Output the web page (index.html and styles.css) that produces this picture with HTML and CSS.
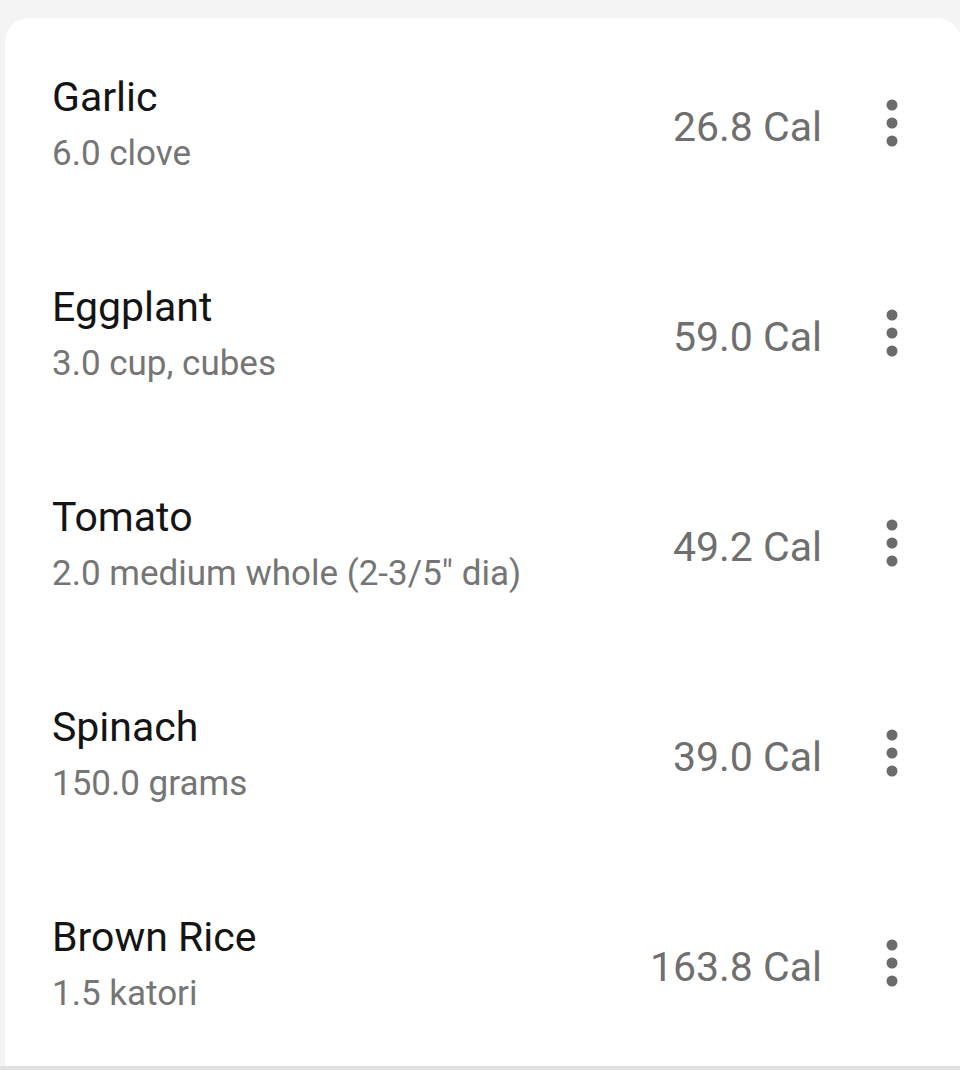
FILE: index.html
```html
<!DOCTYPE html>
<html>
<head>
<meta charset="utf-8">
<link rel="stylesheet" href="styles.css">
</head>
<body>
<div class="card">
  <div class="row">
    <div class="info"><div class="name">Garlic</div><div class="qty">6.0 clove</div></div>
    <div class="cal">26.8 Cal</div>
    <svg class="more" viewBox="0 0 60 60" width="60" height="60"><circle cx="30" cy="12" r="5.5"/><circle cx="30" cy="30" r="5.5"/><circle cx="30" cy="48" r="5.5"/></svg>
  </div>
  <div class="row">
    <div class="info"><div class="name">Eggplant</div><div class="qty">3.0 cup, cubes</div></div>
    <div class="cal">59.0 Cal</div>
    <svg class="more" viewBox="0 0 60 60" width="60" height="60"><circle cx="30" cy="12" r="5.5"/><circle cx="30" cy="30" r="5.5"/><circle cx="30" cy="48" r="5.5"/></svg>
  </div>
  <div class="row">
    <div class="info"><div class="name">Tomato</div><div class="qty">2.0 medium whole (2-3/5" dia)</div></div>
    <div class="cal">49.2 Cal</div>
    <svg class="more" viewBox="0 0 60 60" width="60" height="60"><circle cx="30" cy="12" r="5.5"/><circle cx="30" cy="30" r="5.5"/><circle cx="30" cy="48" r="5.5"/></svg>
  </div>
  <div class="row">
    <div class="info"><div class="name">Spinach</div><div class="qty">150.0 grams</div></div>
    <div class="cal">39.0 Cal</div>
    <svg class="more" viewBox="0 0 60 60" width="60" height="60"><circle cx="30" cy="12" r="5.5"/><circle cx="30" cy="30" r="5.5"/><circle cx="30" cy="48" r="5.5"/></svg>
  </div>
  <div class="row">
    <div class="info"><div class="name">Brown Rice</div><div class="qty">1.5 katori</div></div>
    <div class="cal">163.8 Cal</div>
    <svg class="more" viewBox="0 0 60 60" width="60" height="60"><circle cx="30" cy="12" r="5.5"/><circle cx="30" cy="30" r="5.5"/><circle cx="30" cy="48" r="5.5"/></svg>
  </div>
</div>
<div class="divider"></div>
</body>
</html>
```
FILE: styles.css
```css
html, body {
  margin: 0;
  padding: 0;
  height: 1070px;
  overflow: hidden;
}
body {
  background: #f4f4f4;
  font-family: Roboto, "Noto Sans", sans-serif;
  padding-top: 18px;
  box-sizing: border-box;
}
.card {
  margin-left: 5px;
  width: 956px;
  height: 1048px;
  background: #ffffff;
  border-radius: 24px 24px 0 0;
  padding-top: 2px;
  box-sizing: border-box;
  overflow: hidden;
}
.row {
  height: 210px;
  display: flex;
  align-items: center;
  padding-left: 47px;
  padding-right: 39px;
}
.info {
  flex: 1;
  margin-top: -2px;
}
.name {
  font-size: 41px;
  line-height: 48px;
  color: #141414;
}
.qty {
  font-size: 35px;
  line-height: 44px;
  margin-top: 11px;
  color: #757575;
}
.cal {
  font-size: 41px;
  line-height: 48px;
  color: #6f6f6f;
  margin-top: 4px;
  margin-right: 40px;
}
.more {
  display: block;
  fill: #6b6b6b;
  margin-top: -4px;
}
.divider {
  height: 4px;
  background: #e2e2e2;
}
```
